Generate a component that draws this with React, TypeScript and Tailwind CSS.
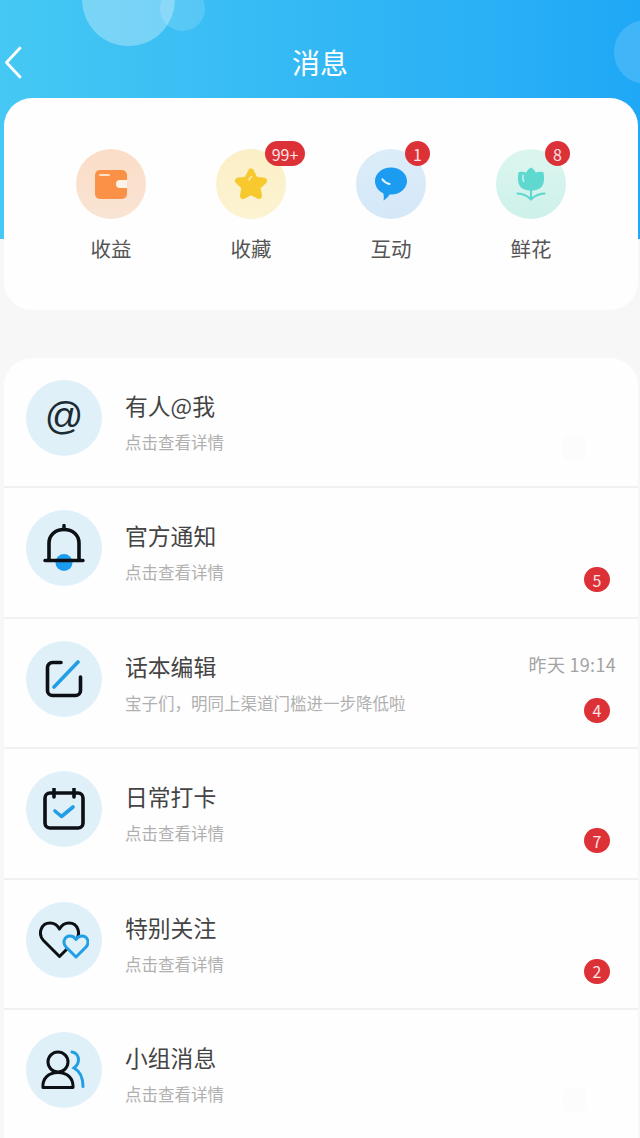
import type { ReactNode } from "react";

const font = { fontFamily: '"Noto Sans CJK SC", "Noto Sans", sans-serif' };

function Badge({ text, className }: { text: string; className: string }) {
  return (
    <span className={`absolute flex h-[25px] items-center justify-center rounded-full bg-[#dd3138] text-[16px] text-[#fbe3e3] ${className}`}>
      {text}
    </span>
  );
}

function WalletIcon() {
  return (
    <svg width="32" height="29" viewBox="0 0 32 29">
      <rect x="0" y="0" width="32" height="29" rx="5" fill="#fb9147" />
      <rect x="4" y="4" width="11" height="2" rx="1" fill="#fde0c8" />
      <path d="M32 10h-7a4 4 0 0 0 0 8h7z" fill="#fdf3ea" />
    </svg>
  );
}

function StarIcon() {
  return (
    <svg width="34" height="34" viewBox="0 0 34 34">
      <path
        d="M17 4.500 21 12.500 30 13.800 23.500 20 25 29 17 24.800 9 29 10.500 20 4 13.800 13 12.500z"
        fill="#f7c92e"
        stroke="#f7c92e"
        strokeWidth="6"
        strokeLinejoin="round"
      />
      <path d="M15 13c.4-1.500 1.200-2.700 2.600-3.400" fill="none" stroke="#fdf0bd" strokeWidth="1.400" strokeLinecap="round" />
    </svg>
  );
}

function ChatIcon() {
  return (
    <svg width="34" height="34" viewBox="0 0 34 34">
      <path
        d="M17 .5C26 .5 33 6.500 33 14c0 7.500-7 13.500-15.500 13.500-.7 0-1.300 0-2-.1-1.300 2.300-3.300 4.600-6 6.100.6-2.800.4-5-.3-7.200C4 23.800 1 19.300 1 14 1 6.500 8 .5 17 .5z"
        fill="#1b9cf0"
      />
      <path d="M8.500 12.500c1.500 2.200 4 3.800 7 4.500" fill="none" stroke="#e4f4fe" strokeWidth="2.200" strokeLinecap="round" />
    </svg>
  );
}

function FlowerIcon() {
  return (
    <svg width="30" height="34" viewBox="0 0 30 34">
      <path
        d="M15 .5c2.400 1.300 3.900 3 4.700 5 2.300-.9 4.800-1 7.800-.3 1 5.500.7 10.300-1 13.400-2 3.400-5.700 5-11.500 5s-9.500-1.600-11.500-5c-1.700-3.100-2-7.900-1-13.400 3-.7 5.500-.6 7.800.3.800-2 2.300-3.700 4.700-5z"
        fill="#5fd8cf"
      />
      <path d="M7 8.500c-.4 2-.2 4 .8 5.800" fill="none" stroke="#d3f6f2" strokeWidth="1.400" strokeLinecap="round" />
      <path d="M15 23v8M1.500 26.500c5.500.3 10 2.300 13.500 6M28.500 26.500c-5.500.3-10 2.300-13.500 6" fill="none" stroke="#5fd8cf" strokeWidth="2.200" strokeLinecap="round" />
    </svg>
  );
}

function BellIcon() {
  return (
    <svg width="42" height="48" viewBox="0 0 42 48">
      <path d="M21 1.500v4" stroke="#0c0f14" strokeWidth="3.400" strokeLinecap="round" />
      <path d="M6 36V19C6 11 12.500 5.500 21 5.500S36 11 36 19v17" fill="none" stroke="#0c0f14" strokeWidth="3.600" strokeLinecap="round" />
      <circle cx="21" cy="38.500" r="8.500" fill="#1b9cf0" />
      <path d="M2 36.500h38" stroke="#0c0f14" strokeWidth="3.400" strokeLinecap="round" />
    </svg>
  );
}

function EditIcon() {
  return (
    <svg width="38" height="38" viewBox="0 0 38 38">
      <path d="M16 2.500H7.500a5 5 0 0 0-5 5v23a5 5 0 0 0 5 5h23a5 5 0 0 0 5-5V17" fill="none" stroke="#0c0f14" strokeWidth="3.600" strokeLinecap="round" />
      <path d="M9 27 33 2" stroke="#229fe4" strokeWidth="3.600" strokeLinecap="round" />
    </svg>
  );
}

function CalendarIcon() {
  return (
    <svg width="42" height="42" viewBox="0 0 42 42">
      <rect x="2" y="5" width="38" height="35" rx="5" fill="none" stroke="#0c0f14" strokeWidth="3.600" />
      <path d="M11 1v8M31 1v8" stroke="#0c0f14" strokeWidth="3.600" strokeLinecap="round" />
      <path d="M12 23l6.500 5.500L30 19" fill="none" stroke="#229fe4" strokeWidth="3.600" strokeLinecap="round" strokeLinejoin="round" />
    </svg>
  );
}

function HeartsIcon() {
  return (
    <svg width="50" height="38" viewBox="0 0 50 38">
      <path
        d="M20.500 35.500 4.500 19.500C-1.500 13 2 2 11 2c4 0 7.500 2.200 9.500 6 2-3.800 5.500-6 9.500-6 9 0 12.500 11 6.500 17.500z"
        fill="none"
        stroke="#0c0f14"
        strokeWidth="3"
        strokeLinejoin="round"
      />
      <path
        d="M37 36 27 26c-4-4.500-1.500-11 4-11 2.500 0 4.700 1.200 6 3.500 1.300-2.300 3.500-3.500 6-3.500 5.500 0 8 6.500 4 11z"
        fill="#dff0f8"
        stroke="#229fe4"
        strokeWidth="3"
        strokeLinejoin="round"
      />
    </svg>
  );
}

function GroupIcon() {
  return (
    <svg width="46" height="40" viewBox="0 0 46 40">
      <circle cx="17" cy="12" r="10" fill="none" stroke="#0c0f14" strokeWidth="3" />
      <path d="M2 37.500c-.8-9 5.500-15 15-15s15.500 6 15 15z" fill="none" stroke="#0c0f14" strokeWidth="3" strokeLinejoin="round" />
      <path d="M31 2c4 .5 6.500 4 6.500 8 0 3.500-2 6-4.500 8 5.500 3 9 9.500 9 18.500" fill="none" stroke="#229fe4" strokeWidth="3" strokeLinecap="round" />
    </svg>
  );
}

const shortcuts: { label: string; icon: ReactNode; bg: string; badge?: string; badgeClass?: string }[] = [
  { label: "收益", icon: <WalletIcon />, bg: "bg-gradient-to-b from-[#fbddc8] to-[#f9e4d3]" },
  { label: "收藏", icon: <StarIcon />, bg: "bg-gradient-to-b from-[#fbefc6] to-[#fcf3d2]", badge: "99+", badgeClass: "-top-[8px] -right-[19px] w-[40px]" },
  { label: "互动", icon: <ChatIcon />, bg: "bg-gradient-to-b from-[#dcedf9] to-[#d5e8f8]", badge: "1", badgeClass: "-top-[8px] right-[-4px] w-[25px]" },
  { label: "鲜花", icon: <FlowerIcon />, bg: "bg-gradient-to-b from-[#dcf6ef] to-[#cdf1ea]", badge: "8", badgeClass: "-top-[8px] right-[-4px] w-[25px]" },
];

const rows: { title: string; sub: string; icon: ReactNode; badge?: string; time?: string; ghost?: boolean }[] = [
  { title: "有人@我", sub: "点击查看详情", icon: <span className="-mt-[5px] text-[38px] leading-none text-[#1c2b33]" style={{ fontFamily: '"Liberation Sans", sans-serif' }}>@</span>, ghost: true },
  { title: "官方通知", sub: "点击查看详情", icon: <BellIcon />, badge: "5" },
  { title: "话本编辑", sub: "宝子们，明同上渠道门槛进一步降低啦", icon: <EditIcon />, badge: "4", time: "昨天 19:14" },
  { title: "日常打卡", sub: "点击查看详情", icon: <CalendarIcon />, badge: "7" },
  { title: "特别关注", sub: "点击查看详情", icon: <HeartsIcon />, badge: "2" },
  { title: "小组消息", sub: "点击查看详情", icon: <GroupIcon />, ghost: true },
];

export default function App() {
  return (
    <div className="h-[1138px] w-[640px] overflow-hidden bg-[#f7f7f7]" style={font}>
      <header className="relative h-[239px] overflow-hidden bg-gradient-to-r from-[#45c8f3] to-[#1fa8f6]">
        <div className="absolute -top-[14px] left-[160px] h-[45px] w-[45px] rounded-full bg-white/15" />
        <div className="absolute -top-[47px] left-[82px] h-[93px] w-[93px] rounded-full bg-white/30" />
        <div className="absolute left-[614px] top-[20px] h-[64px] w-[64px] rounded-full bg-white/15" />
        <div className="flex h-[98px] items-center justify-center pt-[26px]">
          <svg className="absolute left-[4px] top-[46px]" width="18" height="33" viewBox="0 0 18 33">
            <path d="M16 2 2.500 16.500 16 31" fill="none" stroke="#fff" strokeWidth="2.800" strokeLinecap="round" strokeLinejoin="round" />
          </svg>
          <h1 className="text-[28px] font-normal text-white">消息</h1>
        </div>
      </header>

      <section className="relative mx-[4px] -mt-[141px] h-[212px] w-[634px] rounded-[28px] bg-[#fefefe]">
        <div className="grid grid-cols-4 px-[37px] pt-[51px]">
          {shortcuts.map((item) => (
            <div key={item.label} className="flex flex-col items-center">
              <div className={`relative flex h-[70px] w-[70px] items-center justify-center rounded-full ${item.bg}`}>
                {item.icon}
                {item.badge && <Badge text={item.badge} className={item.badgeClass ?? ""} />}
              </div>
              <span className="mt-[14px] text-[20.500px] leading-[30px] text-[#555]">{item.label}</span>
            </div>
          ))}
        </div>
      </section>

      <section className="mx-[4px] mt-[48px] w-[634px] overflow-hidden rounded-t-[28px] bg-[#fefefe]">
        {rows.map((row) => (
          <div key={row.title} className="relative flex h-[130.4px] items-start border-b-2 border-[#eff2f0] px-[22px] pt-[22px]">
            <div className="flex h-[76px] w-[76px] shrink-0 items-center justify-center rounded-full bg-[#dff0f8]">{row.icon}</div>
            <div className="ml-[23px] min-w-0 flex-1">
              <div className="flex items-center justify-between">
                <h2 className="-mt-[1px] text-[22.800px] font-normal leading-[54px] text-[#444]">{row.title}</h2>
                {row.time && <span className="-mt-[6px] text-[18px] tracking-[0.300px] text-[#a3a3a3]">{row.time}</span>}
              </div>
              <p className="-mt-[3px] text-[16.500px] leading-[24px] text-[#b0b0b0]">{row.sub}</p>
            </div>
            {row.badge && <Badge text={row.badge} className="right-[28px] top-[79px] w-[26px]" />}
            {row.ghost && <div className="absolute right-[52px] top-[78px] h-[24px] w-[24px] rounded-[6px] bg-[#fcfcfc]" />}
          </div>
        ))}
      </section>
    </div>
  );
}
